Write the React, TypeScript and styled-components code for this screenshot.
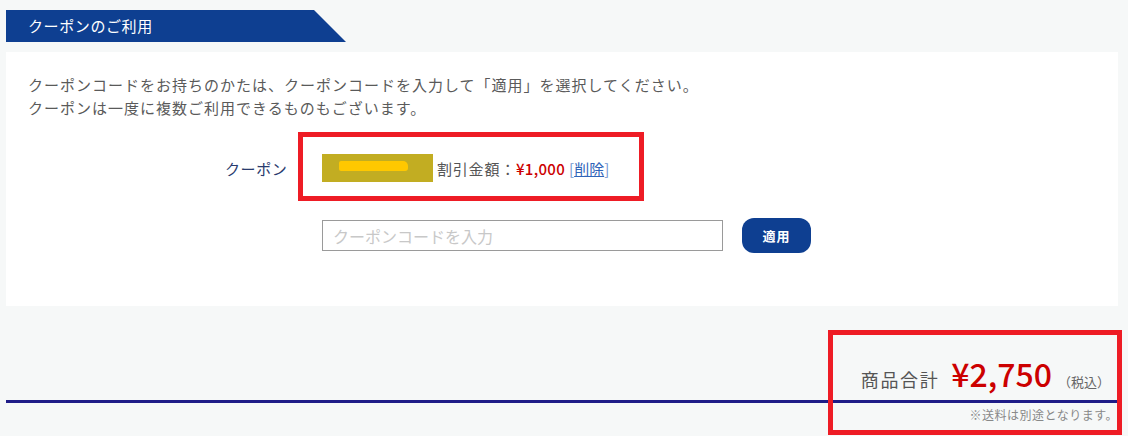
import React from 'react';
import styled, { createGlobalStyle } from 'styled-components';

const GlobalStyle = createGlobalStyle`
  html, body {
    margin: 0;
    padding: 0;
    background: #f6f8f8;
  }
  body {
    font-family: "Noto Sans CJK JP", "Noto Sans", sans-serif;
    color: #555;
  }
`;

const Page = styled.div`
  position: relative;
  width: 1128px;
  height: 436px;
  padding: 10px 10px 0 6px;
  box-sizing: border-box;
  overflow: hidden;
`;

const SectionTitle = styled.h2`
  margin: 0;
  width: 340px;
  height: 32px;
  padding-left: 22px;
  box-sizing: border-box;
  background: #0e3f91;
  clip-path: polygon(0 0, 308px 0, 100% 100%, 0 100%);
  color: #fff;
  font-size: 15px;
  font-weight: 400;
  letter-spacing: 0.6px;
  line-height: 32px;
`;

const Panel = styled.section`
  margin-top: 10px;
  height: 254px;
  background: #fff;
  padding: 21px 22px 0;
  box-sizing: border-box;
`;

const Lead = styled.p`
  margin: 0;
  font-size: 15px;
  line-height: 23px;
  letter-spacing: 1px;
  color: #5a5a5a;
`;

const FormGrid = styled.div`
  display: grid;
  grid-template-columns: 97px auto;
  grid-template-rows: 28px 35px;
  row-gap: 36px;
  align-items: center;
  margin: 35px 0 0 197px;
`;

const Label = styled.div`
  font-size: 15px;
  letter-spacing: 0.6px;
  color: #2a3b6e;
`;

const AppliedCoupon = styled.div`
  display: flex;
  align-items: center;
  font-size: 15px;
  letter-spacing: 0.8px;
  color: #555;
`;

const Redacted = styled.span`
  display: flex;
  align-items: center;
  width: 111px;
  height: 28px;
  margin-right: 4px;
  padding: 0 0 4px 17px;
  box-sizing: border-box;
  background: #c2ad22;
`;

const RedactedMark = styled.span`
  display: block;
  width: 69px;
  height: 10px;
  border-radius: 2px 5px 3px 2px;
  background: #ffc800;
  filter: blur(0.7px);
`;

const Amount = styled.span`
  color: #cc0000;
  font-weight: 500;
  letter-spacing: 0.3px;
`;

const Remove = styled.span`
  margin-left: 4px;
  color: #6f93cf;
  letter-spacing: 0;

  a {
    color: #2f64b8;
    text-decoration: underline;
  }
`;

const CodeRow = styled.div`
  grid-column: 2;
  display: flex;
  align-items: center;
  gap: 19px;
`;

const CodeInput = styled.input`
  width: 401px;
  height: 31px;
  padding: 0 10px;
  box-sizing: border-box;
  border: 1px solid #9a9a9a;
  font-family: inherit;
  font-size: 16px;
  letter-spacing: 0;
  outline: none;

  &::placeholder {
    color: #c8c8c8;
  }
`;

const ApplyButton = styled.button`
  width: 69px;
  height: 35px;
  border: none;
  border-radius: 12px;
  background: #0e3f91;
  color: #fff;
  font-family: inherit;
  font-size: 13px;
  font-weight: 700;
  letter-spacing: 1px;
`;

const Summary = styled.div`
  margin-top: 44px;
  width: 1112px;
`;

const TotalRow = styled.div`
  display: flex;
  justify-content: flex-end;
  align-items: baseline;
  height: 48px;
  padding: 0 8px 2px 0;
  border-bottom: 3px solid #1f1d88;
`;

const TotalLabel = styled.span`
  font-size: 18px;
  letter-spacing: 1.6px;
  color: #555;
`;

const TotalPrice = styled.span`
  margin-left: 12px;
  font-size: 32px;
  font-weight: 500;
  color: #cc0000;
`;

const TaxNote = styled.span`
  margin-left: 6px;
  font-size: 13px;
  color: #666;
`;

const ShippingNote = styled.p`
  margin: 3px 0 0 0;
  text-align: right;
  font-size: 12px;
  letter-spacing: 0.5px;
  color: #888;
`;

const Highlight = styled.div<{ $left: number; $top: number; $w: number; $h: number }>`
  position: absolute;
  left: ${(p) => p.$left}px;
  top: ${(p) => p.$top}px;
  width: ${(p) => p.$w}px;
  height: ${(p) => p.$h}px;
  border: 5px solid #ee1c25;
  box-sizing: border-box;
  pointer-events: none;
`;

export default function App() {
  return (
    <>
      <GlobalStyle />
      <Page>
        <SectionTitle>クーポンのご利用</SectionTitle>
        <Panel>
          <Lead>クーポンコードをお持ちのかたは、クーポンコードを入力して「適用」を選択してください。</Lead>
          <Lead>クーポンは一度に複数ご利用できるものもございます。</Lead>
          <FormGrid>
            <Label>クーポン</Label>
            <AppliedCoupon>
              <Redacted>
                <RedactedMark />
              </Redacted>
              割引金額：<Amount>¥1,000</Amount>
              <Remove>
                [<a href="#">削除</a>]
              </Remove>
            </AppliedCoupon>
            <CodeRow>
              <CodeInput placeholder="クーポンコードを入力" />
              <ApplyButton>適用</ApplyButton>
            </CodeRow>
          </FormGrid>
        </Panel>
        <Summary>
          <TotalRow>
            <TotalLabel>商品合計</TotalLabel>
            <TotalPrice>¥2,750</TotalPrice>
            <TaxNote>（税込）</TaxNote>
          </TotalRow>
          <ShippingNote>※送料は別途となります。</ShippingNote>
        </Summary>
        <Highlight $left={298} $top={132} $w={346} $h={69} />
        <Highlight $left={828} $top={330} $w={294} $h={105} />
      </Page>
    </>
  );
}
